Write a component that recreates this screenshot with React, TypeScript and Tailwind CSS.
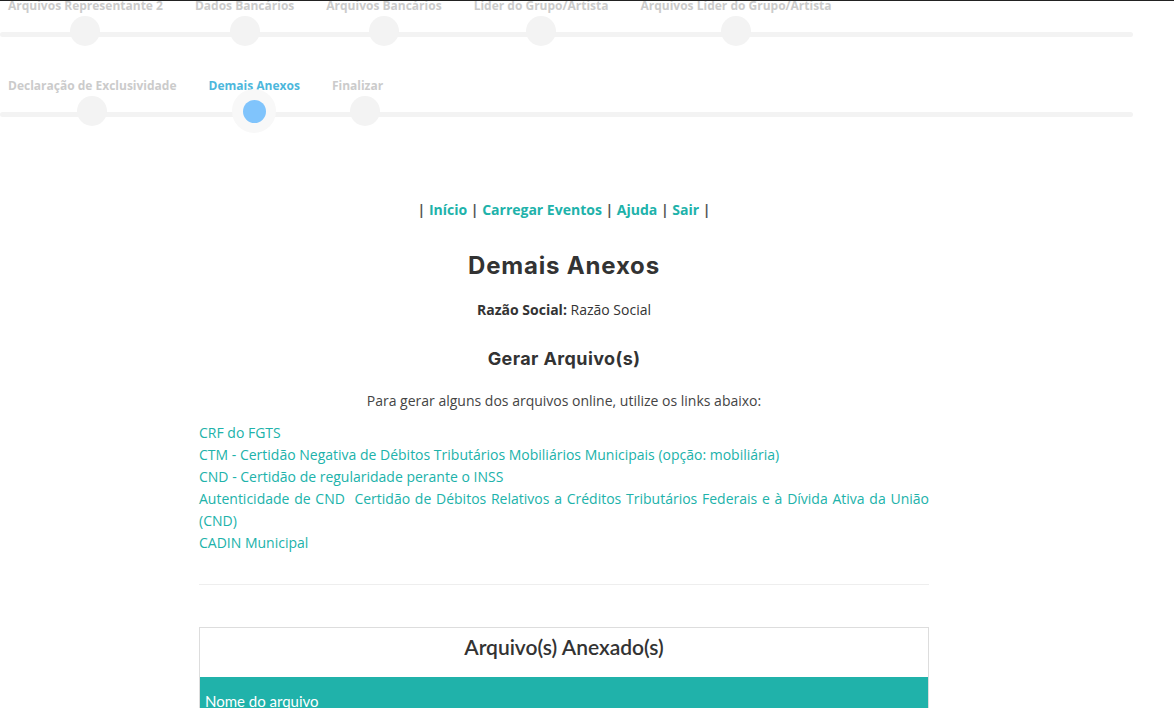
import React from "react";

type Step = { label: string; active?: boolean };

const row1: Step[] = [
  { label: "Arquivos Representante 2" },
  { label: "Dados Bancários" },
  { label: "Arquivos Bancários" },
  { label: "Líder do Grupo/Artista" },
  { label: "Arquivos Líder do Grupo/Artista" },
];

const row2: Step[] = [
  { label: "Declaração de Exclusividade" },
  { label: "Demais Anexos", active: true },
  { label: "Finalizar" },
];

function StepRow({ steps }: { steps: Step[] }) {
  return (
    <div className="relative h-[80px]">
      <div className="absolute left-0 top-[36px] h-[5px] w-[1133px] rounded-full bg-[#f3f3f3]" />
      <div className="relative flex gap-8 pl-2">
        {steps.map((s) => (
          <div key={s.label} className="flex min-w-[66px] flex-col items-start">
            <div
              className={
                "whitespace-nowrap pt-[2px] text-[12px] font-bold leading-4 " +
                (s.active ? "text-[#4db7dc]" : "text-[#cbcbcb]")
              }
              style={{ fontFamily: "'Open Sans', Lato, sans-serif" }}
            >
              {s.label}
            </div>
            <div className="relative mt-[2px] flex h-[30px] w-[30px] items-center justify-center self-center">
              {s.active ? (
                <>
                  <div className="absolute left-[-7px] top-[-7px] h-[44px] w-[44px] rounded-full bg-[#f8f8f8]" />
                  <div className="relative h-[23px] w-[23px] rounded-full bg-[#80c4fc]" />
                </>
              ) : (
                <div className="h-[30px] w-[30px] rounded-full bg-[#f3f3f3]" />
              )}
            </div>
          </div>
        ))}
      </div>
    </div>
  );
}

const links = [
  "CRF do FGTS",
  "CTM - Certidão Negativa de Débitos Tributários Mobiliários Municipais (opção: mobiliária)",
  "CND - Certidão de regularidade perante o INSS",
];

export default function App() {
  const body = { fontFamily: "'Open Sans', 'Liberation Sans', sans-serif" };
  const head = { fontFamily: "Inter, 'Open Sans', sans-serif" };
  return (
    <div className="min-h-screen w-full overflow-hidden border-t border-[#222] bg-white" style={body}>
      <div className="w-[1128px]">
        <div className="-mt-[5px]">
          <StepRow steps={row1} />
          <StepRow steps={row2} />
        </div>

        <div className="mx-auto w-[730px] text-[14px] text-[#333]">
          <div className="mt-[44px] text-center leading-[20px] font-bold text-[#555]">
            | <a className="text-[#20b2aa]">Início</a> |{" "}
            <a className="text-[#20b2aa]">Carregar Eventos</a> |{" "}
            <a className="text-[#20b2aa]">Ajuda</a> |{" "}
            <a className="text-[#20b2aa]">Sair</a> |
          </div>

          <h1
            className="mt-[33px] text-center text-[24px] font-bold leading-[26px] tracking-[0.8px] text-[#333]"
            style={head}
          >
            Demais Anexos
          </h1>

          <p className="mt-[21px] text-center leading-[20px] text-[#333]">
            <span className="font-bold">Razão Social:</span> Razão Social
          </p>

          <h2
            className="mt-[29px] text-center text-[18px] font-bold leading-[20px] tracking-[0.4px] text-[#333]"
            style={head}
          >
            Gerar Arquivo(s)
          </h2>

          <p className="mt-[22px] text-center leading-[20px] text-[#444]">
            Para gerar alguns dos arquivos online, utilize os links abaixo:
          </p>

          <div className="mt-[11px] text-justify leading-[22px] text-[#20b2aa]">
            {links.map((l) => (
              <div key={l}>
                <a>{l}</a>
              </div>
            ))}
            <div>
              <a>Autenticidade de CND</a>&nbsp; <a>Certidão de Débitos Relativos a Créditos Tributários Federais e à Dívida Ativa da União (CND)</a>
            </div>
            <div>
              <a>CADIN Municipal</a>
            </div>
          </div>

          <hr className="mt-[30px] border-0 border-t border-[#eeeeee]" />

          <div className="mt-[42px] border border-[#dddddd]">
            <div
              className="pt-[9px] pb-[20px] text-center text-[21px] font-semibold leading-[20px] text-[#333]"
              style={{ fontFamily: "Lato, 'Open Sans', sans-serif" }}
            >
              Arquivo(s) Anexado(s)
            </div>
            <div
              className="bg-[#20b2aa] px-[5px] pt-[14px] pb-[10px] text-[15px] leading-[20px] text-white"
              style={{ fontFamily: "Lato, 'Open Sans', sans-serif" }}
            >
              Nome do arquivo
            </div>
          </div>
          <div className="h-[60px]" />
        </div>
      </div>
    </div>
  );
}
